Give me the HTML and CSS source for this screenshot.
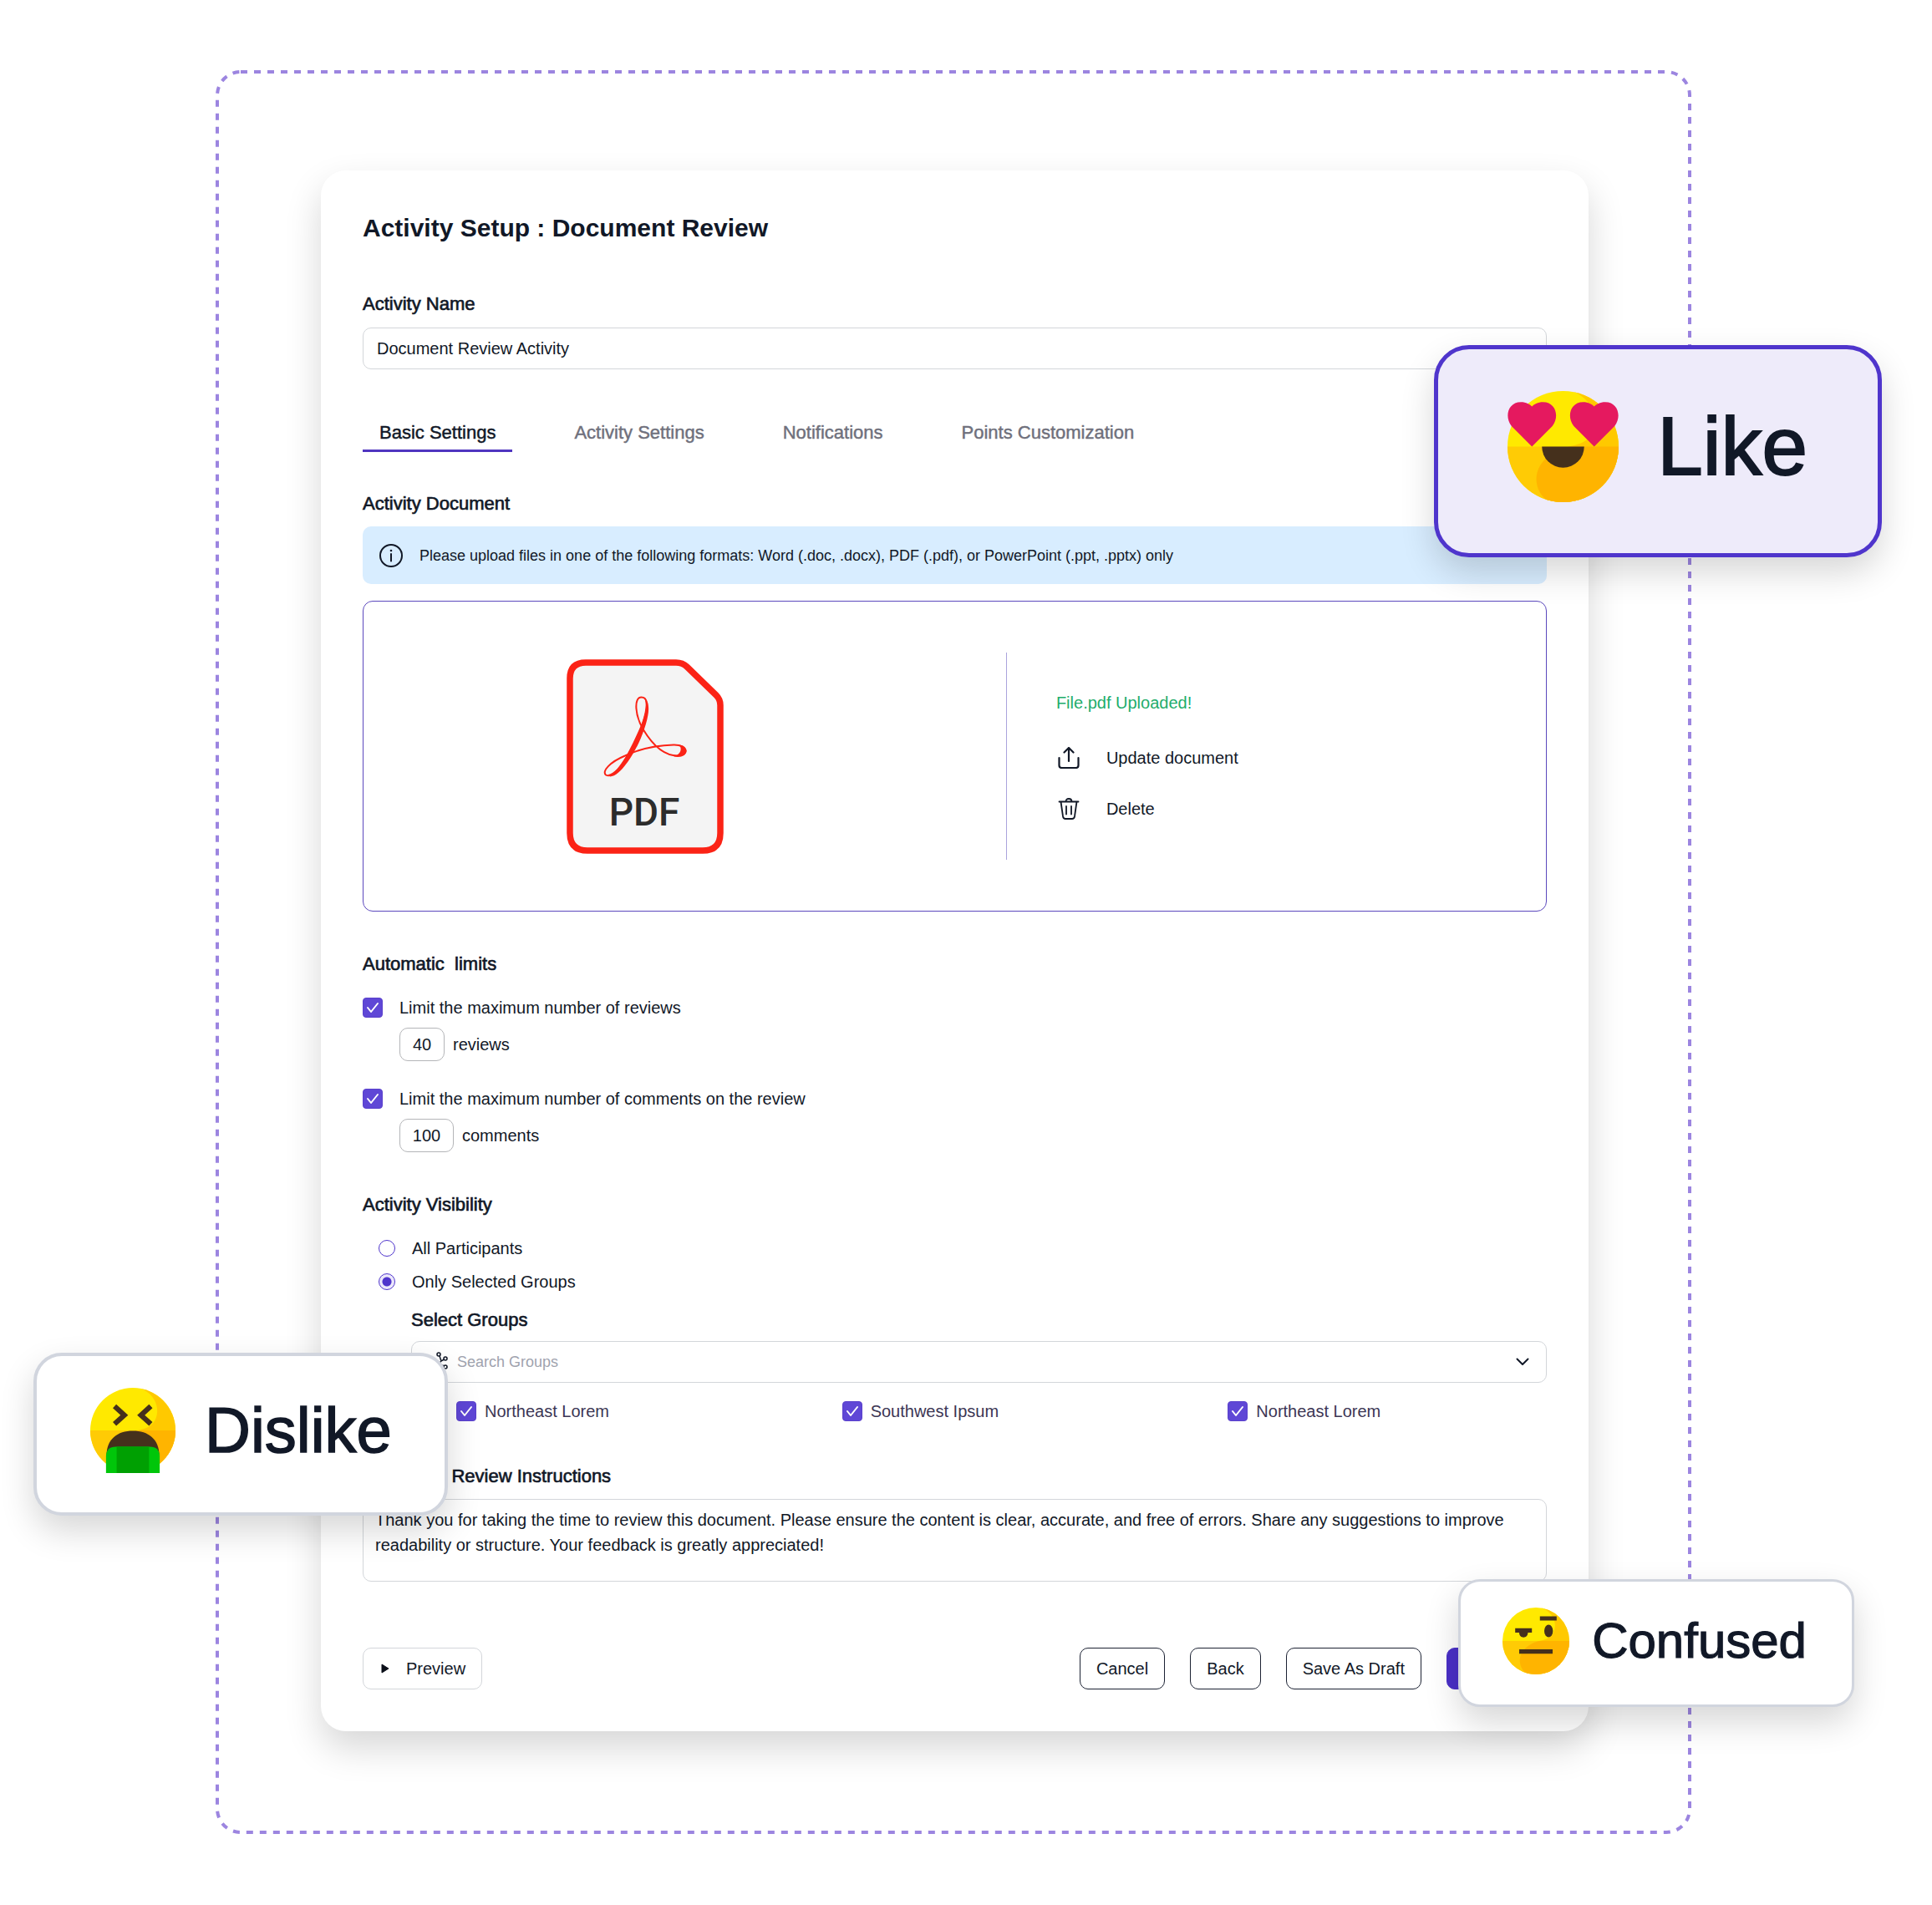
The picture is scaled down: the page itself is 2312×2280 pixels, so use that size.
FILE: index.html
```html
<!DOCTYPE html>
<html lang="en">
  <head>
    <meta charset="UTF-8" />
    <meta name="viewport" content="width=device-width, initial-scale=1.0" />
    <title>Activity Setup : Document Review</title>
    <link rel="stylesheet" href="styles.css">
  </head>
  <body>
    <!-- Shared emoji face -->
    <svg class="sprite" aria-hidden="true">
      <defs>
        <clipPath id="faceClip"><circle cx="50" cy="50" r="50" /></clipPath>
        <clipPath id="lowerHalf"><rect x="0" y="50" width="100" height="50" /></clipPath>
        <symbol id="face" viewBox="0 0 100 100">
          <g clip-path="url(#faceClip)">
            <rect width="100" height="100" fill="#ffe900" />
            <rect y="50" width="100" height="50" fill="#ffcb05" />
            <path d="M58 0C84 10 84 40 66 47C58 50 52 50 44 54C18 68 24 92 38 100H100V0Z" fill="#ffc900" />
            <path d="M58 0C84 10 84 40 66 47C58 50 52 50 44 54C18 68 24 92 38 100H100V0Z" fill="#ffb400" clip-path="url(#lowerHalf)" />
          </g>
        </symbol>
      </defs>
    </svg>

    <div class="frame">
      <svg class="frame-line" aria-hidden="true"><rect width="100%" height="100%" rx="28" /></svg>

      <form class="card">
        <h1 class="page-title">Activity Setup : Document Review</h1>

        <section class="field">
          <label class="heading" for="activityName">Activity Name</label>
          <input class="text-input" type="text" id="activityName" value="Document Review Activity" />
        </section>

        <nav class="tabs">
          <a class="tab active" href="#basic">Basic Settings</a>
          <a class="tab" href="#activity">Activity Settings</a>
          <a class="tab" href="#notifications">Notifications</a>
          <a class="tab" href="#points">Points Customization</a>
        </nav>

        <!-- Uploaded document -->
        <section class="document">
          <h2 class="heading">Activity Document</h2>
          <div class="info-banner">
            <svg width="28" height="28" viewBox="0 0 28 28" fill="none" stroke="#111827" stroke-width="2">
              <circle cx="14" cy="14" r="13" />
              <path d="M14 12V20.500" stroke-linecap="round" />
              <circle cx="14" cy="8" r="1.300" fill="#111827" stroke="none" />
            </svg>
            <p>Please upload files in one of the following formats: Word (.doc, .docx), PDF (.pdf), or PowerPoint (.ppt, .pptx) only</p>
          </div>
          <div class="upload-box">
            <div class="upload-preview">
              <svg width="188" height="233" viewBox="0 0 188 233" role="img" aria-label="PDF file">
                <path d="M23 4H131Q139 4 144 9L179 43Q184 48 184 55V208Q184 229 163 229H25Q4 229 4 208V23Q4 4 23 4Z" fill="#f4f4f4" stroke="#fb2316" stroke-width="7.500" />
                <path d="M89.500 45.500C80 45.500 82 68 92 84.500C102 101 116 115.500 133 115.500C147 115.500 146 102 128 102.500C105 103 84 109 70 115.500C52 123 42 134 47 138.500C60 146 84 98 91 77C99 52 96 45.500 89.500 45.500Z" fill="none" stroke="#fb2316" stroke-width="2" />
                <path d="M94 48C97 60 92 73 86 86C79 101 64 136 50 138L52 140.500C65 140 80 113 86 101C94 84 99 66 98 57C98 51 95 48 94 48Z" fill="#fb2316" />
                <path d="M134 102.500C139 106 137 114 128 116.500C138 118 143 115 143.500 110C143 105 139 102.500 134 102.500Z" fill="#fb2316" />
                <text class="pdf-text" x="93" y="199" text-anchor="middle">PDF</text>
              </svg>
            </div>
            <div class="upload-actions">
              <p class="upload-status">File.pdf Uploaded!</p>
              <button class="link-button" type="button">
                <svg width="26" height="26" viewBox="0 0 26 26" fill="none" stroke="#111827" stroke-width="2.200" stroke-linecap="round" stroke-linejoin="round">
                  <path d="M1.500 13V22Q1.500 25 4.500 25H21.500Q24.500 25 24.500 22V13M13 17V1.500M7.500 6.500L13 1L18.500 6.500" />
                </svg>
                Update document
              </button>
              <button class="link-button" type="button">
                <svg width="26" height="26" viewBox="0 0 26 26" fill="none" stroke="#111827" stroke-width="1.800" stroke-linecap="round" stroke-linejoin="round">
                  <path d="M1.500 4.500H24.500M3.500 4.500L6 22Q6.500 25 9 25H17Q19.500 25 20 22L22.500 4.500M9.500 4.500Q9.500 1 13 1Q16.500 1 16.500 4.500M10 10V19.500M16 10V19.500" />
                </svg>
                Delete
              </button>
            </div>
          </div>
        </section>

        <!-- Limits -->
        <section class="limits">
          <h2 class="heading">Automatic &nbsp;limits</h2>
          <div class="limit">
            <label class="check-row">
              <input class="check" type="checkbox" checked />
              Limit the maximum number of reviews
            </label>
            <label class="amount">
              <input class="amount-input" type="text" value="40" size="2" />
              reviews
            </label>
          </div>
          <div class="limit">
            <label class="check-row">
              <input class="check" type="checkbox" checked />
              Limit the maximum number of comments on the review
            </label>
            <label class="amount">
              <input class="amount-input wide" type="text" value="100" size="3" />
              comments
            </label>
          </div>
        </section>

        <!-- Visibility -->
        <section class="visibility">
          <h2 class="heading">Activity Visibility</h2>
          <div class="radios">
            <label class="radio-row"><input class="radio" type="radio" name="visibility" /> All Participants</label>
            <label class="radio-row"><input class="radio" type="radio" name="visibility" checked /> Only Selected Groups</label>
          </div>
          <div class="groups">
            <label class="heading" for="groupSearch">Select Groups</label>
            <div class="group-search">
              <svg width="24" height="24" viewBox="0 0 24 24" fill="none" stroke="#111827" stroke-width="1.500">
                <circle cx="12" cy="3" r="2" />
                <circle cx="20" cy="8" r="2" />
                <circle cx="20" cy="18" r="2" />
                <circle cx="4" cy="12" r="2" />
                <path d="M13 5L15 11L18.500 9M15 11L12 14L18.500 17M12 14L6 12" />
              </svg>
              <input class="group-input" type="text" id="groupSearch" placeholder="Search Groups" />
              <button class="chevron" type="button" aria-label="Open groups">
                <svg width="16" height="10" viewBox="0 0 16 10" fill="none" stroke="#111827" stroke-width="2" stroke-linecap="round" stroke-linejoin="round">
                  <path d="M1.500 1.500L8 8L14.500 1.500" />
                </svg>
              </button>
            </div>
            <div class="group-list">
              <label class="group"><input class="check" type="checkbox" checked /> Northeast Lorem</label>
              <label class="group"><input class="check" type="checkbox" checked /> Southwest Ipsum</label>
              <label class="group"><input class="check" type="checkbox" checked /> Northeast Lorem</label>
            </div>
          </div>
        </section>

        <section class="instructions">
          <label class="heading" for="instructions">Document Review Instructions</label>
          <textarea class="text-area" id="instructions">Thank you for taking the time to review this document. Please ensure the content is clear, accurate, and free of errors. Share any suggestions to improve readability or structure. Your feedback is greatly appreciated!</textarea>
        </section>

        <footer class="actions">
          <button class="btn btn-light" type="button">
            <svg width="10" height="12" viewBox="0 0 10 12"><path d="M1 1L9 6L1 11Z" fill="#0b0f19" stroke="#0b0f19" stroke-linejoin="round" /></svg>
            Preview
          </button>
          <div class="actions-right">
            <button class="btn" type="button">Cancel</button>
            <button class="btn" type="button">Back</button>
            <button class="btn" type="button">Save As Draft</button>
            <button class="btn btn-primary" type="submit">Continue</button>
          </div>
        </footer>
      </form>

      <!-- Floating reactions -->
      <div class="reaction like">
        <svg width="133" height="133" viewBox="0 0 100 100" aria-hidden="true">
          <use href="#face" width="100" height="100" />
          <path d="M22 50L4 32C-3 24 0 10 12 10C17 10 20 12 22 14C24 12 27 10 32 10C44 10 47 24 40 32Z" fill="#e5195f" />
          <path d="M78 50L60 32C53 24 56 10 68 10C73 10 76 12 78 14C80 12 83 10 88 10C100 10 103 24 96 32Z" fill="#e5195f" />
          <path d="M31 50H69A19 19 0 0 1 31 50Z" fill="#45301c" />
        </svg>
        <span>Like</span>
      </div>

      <div class="reaction dislike">
        <svg width="102" height="102" viewBox="0 0 100 100" aria-hidden="true">
          <use href="#face" width="100" height="100" />
          <path d="M28.500 21.500L40 32L28.500 42.500M71 21.500L59.500 32L71 42.500" fill="none" stroke="#45301c" stroke-width="6" />
          <path d="M19 80C19 60 32 50.500 50 50.500C68 50.500 81 60 81 80Z" fill="#45301c" />
          <path d="M18.500 100V80Q19 69 30 69H70Q81 69 81.500 80V100Z" fill="#00c60a" />
          <rect x="31" y="69" width="38" height="31" fill="#00a002" />
        </svg>
        <span>Dislike</span>
      </div>

      <div class="reaction confused">
        <svg width="80" height="80" viewBox="0 0 100 100" aria-hidden="true">
          <use href="#face" width="100" height="100" />
          <path d="M56 13H81V19.500H56ZM19 31H44V37.500H38C38 47 25 47 25 37.500H19ZM25 62.500H75V69H25Z" fill="#45301c" />
          <ellipse cx="69" cy="35" rx="6.500" ry="9.500" fill="#45301c" />
        </svg>
        <span>Confused</span>
      </div>
    </div>
  </body>
</html>
```
FILE: styles.css
```css
* {
  box-sizing: border-box;
}
body {
  margin: 0;
  background-color: #fff;
  color: #111827;
  font-family: "Liberation Sans", Arial, sans-serif;
  font-size: 20px;
  line-height: 24px;
  overflow-x: hidden;
}
h1,
h2,
p {
  margin: 0;
}
svg {
  display: block;
  flex-shrink: 0;
}
input,
textarea,
button {
  font: inherit;
  color: inherit;
  margin: 0;
}
button {
  cursor: pointer;
}
.sprite {
  position: absolute;
  width: 0;
  height: 0;
}

/* Dashed frame around the card */
.frame {
  position: relative;
  margin: 86px 290px 86px 260px;
  padding: 118px 121px 121px 124px;
}
.frame-line {
  position: absolute;
  left: 0;
  top: 0;
  width: 100%;
  height: 100%;
  overflow: visible;
}
.frame-line rect {
  fill: none;
  stroke: #9c85e0;
  stroke-width: 4px;
  stroke-dasharray: 8 8;
}
.card {
  position: relative;
  padding: 50px;
  border-radius: 30px;
  background-color: #fff;
  box-shadow: 0 20px 44px rgba(0, 0, 0, 0.16);
}

/* Headings */
.page-title {
  font-size: 30px;
  line-height: 38px;
  margin-bottom: 58px;
}
.heading {
  display: block;
  font-size: 22px;
  font-weight: normal;
  line-height: 28px;
  -webkit-text-stroke: 0.03em currentColor;
}

/* Text fields */
.field {
  margin-bottom: 62px;
}
.text-input,
.text-area,
.group-search {
  display: block;
  width: 100%;
  border: 1px solid #d3d6da;
  border-radius: 10px;
  background-color: #fff;
}
.text-input {
  height: 50px;
  margin-top: 14px;
  padding: 0 16px;
}

/* Tabs */
.tabs {
  display: flex;
  gap: 54px;
  margin-bottom: 48px;
}
.tab {
  padding: 0 20px 6px;
  border-bottom: 3px solid transparent;
  color: #6f707c;
  font-size: 22px;
  line-height: 28px;
  text-decoration: none;
  -webkit-text-stroke: 0.02em currentColor;
}
.tab.active {
  border-bottom-color: #4f35c0;
  color: #111827;
}

/* Document upload */
.info-banner {
  display: flex;
  align-items: center;
  gap: 20px;
  min-height: 69px;
  margin: 13px 0 20px;
  padding: 10px 20px;
  border-radius: 10px;
  background-color: #d8edff;
  font-size: 18px;
}
.upload-box {
  display: grid;
  grid-template-columns: 770fr 647fr;
  padding: 61px 0;
  border: 1px solid #5b48bd;
  border-radius: 12px;
}
.upload-preview {
  display: flex;
  justify-content: center;
  align-items: center;
  padding-right: 94px;
}
.pdf-text {
  fill: #2c2c2c;
  font-family: Roboto, "Liberation Sans", sans-serif;
  font-size: 46px;
  font-weight: 500;
}
.upload-actions {
  display: flex;
  flex-direction: column;
  justify-content: center;
  align-items: flex-start;
  gap: 35px;
  min-height: 248px;
  padding-left: 59px;
  border-left: 1px solid #aaa4dc;
}
.upload-status {
  margin-bottom: 6px;
  color: #22ad6b;
}
.link-button {
  display: flex;
  align-items: center;
  gap: 32px;
  padding: 0 2px;
  border: none;
  background: none;
}

/* Limits */
.limits,
.visibility {
  margin-top: 49px;
}
.limit {
  margin-top: 26px;
}
.limit + .limit {
  margin-top: 33px;
}
.check-row {
  display: flex;
  align-items: center;
  gap: 20px;
}
.check {
  appearance: none;
  flex-shrink: 0;
  width: 24px;
  height: 24px;
  border: 1px solid #5a41cc;
  border-radius: 4px;
}
.check:checked {
  background: #5f47d6 url("data:image/svg+xml,%3Csvg xmlns='http://www.w3.org/2000/svg' viewBox='0 0 24 24' fill='none' stroke='white' stroke-width='2' stroke-linecap='round' stroke-linejoin='round'%3E%3Cpath d='M6 12l4 5 8-10'/%3E%3C/svg%3E") center / 24px 24px no-repeat;
}
.amount {
  display: flex;
  align-items: center;
  gap: 10px;
  margin: 12px 0 0 44px;
}
.amount-input {
  width: 54px;
  height: 40px;
  padding: 0;
  border: 1px solid #b4b5b8;
  border-radius: 10px;
  text-align: center;
}
.amount-input.wide {
  width: 65px;
}

/* Visibility */
.radios {
  display: flex;
  flex-direction: column;
  gap: 16px;
  margin: 26px 0 20px 19px;
}
.radio-row {
  display: flex;
  align-items: center;
  gap: 20px;
}
.radio {
  appearance: none;
  width: 20px;
  height: 20px;
  border: 1px solid #4f35cc;
  border-radius: 50%;
}
.radio:checked {
  background: radial-gradient(circle, #4f35cc 0 5px, #ece8fb 6px);
}
.groups {
  margin-left: 58px;
}
.group-search {
  display: flex;
  align-items: center;
  height: 50px;
  margin-top: 11px;
  padding: 0 20px;
}
.group-input {
  flex: 1;
  height: 40px;
  padding: 0 10px;
  border: none;
  outline: none;
  background: none;
  font-size: 18px;
}
.group-input::placeholder {
  color: #9fa3ae;
}
.chevron {
  padding: 4px 0;
  border: none;
  background: none;
}
.group-list {
  display: grid;
  grid-template-columns: repeat(3, 1fr);
  gap: 80px;
  margin: 22px 0 0 54px;
}
.group {
  display: flex;
  align-items: center;
  gap: 10px;
  color: #3c3654;
}

/* Instructions */
.instructions {
  margin-top: 52px;
}
.text-area {
  height: 99px;
  margin-top: 13px;
  padding: 9px 14px;
  line-height: 30px;
  resize: none;
  overflow: hidden;
}

/* Footer buttons */
.actions,
.actions-right {
  display: flex;
  justify-content: space-between;
  gap: 30px;
}
.actions {
  margin-top: 79px;
}
.btn {
  display: flex;
  align-items: center;
  gap: 20px;
  height: 50px;
  padding: 0 19px;
  border: 1px solid #1c2233;
  border-radius: 10px;
  background-color: #fff;
}
.btn-light {
  padding-left: 21px;
  border-color: #d3d6da;
}
.btn-primary {
  border-color: #4a30c8;
  background-color: #4a30c8;
  color: #fff;
}

/* Floating reactions */
.reaction {
  position: absolute;
  display: flex;
  align-items: center;
  border: 4px solid #d1d5de;
  background-color: #fff;
  box-shadow: 0 18px 40px rgba(0, 0, 0, 0.16);
  line-height: 1;
  -webkit-text-stroke: 0.02em currentColor;
}
.like {
  top: 327px;
  right: -230px;
  gap: 46px;
  height: 254px;
  padding: 0 84px 12px 83px;
  border: 5px solid #4f35cc;
  border-radius: 42px;
  background-color: #eeebfa;
  font-size: 98px;
}
.dislike {
  top: 1533px;
  left: -220px;
  gap: 35px;
  height: 195px;
  padding: 0 63px 10px 64px;
  border-radius: 34px;
  font-size: 76px;
}
.confused {
  right: -197px;
  bottom: 150px;
  gap: 27px;
  height: 153px;
  padding: 0 54px 6px 50px;
  border-width: 3px;
  border-radius: 26px;
  font-size: 60px;
}
```
